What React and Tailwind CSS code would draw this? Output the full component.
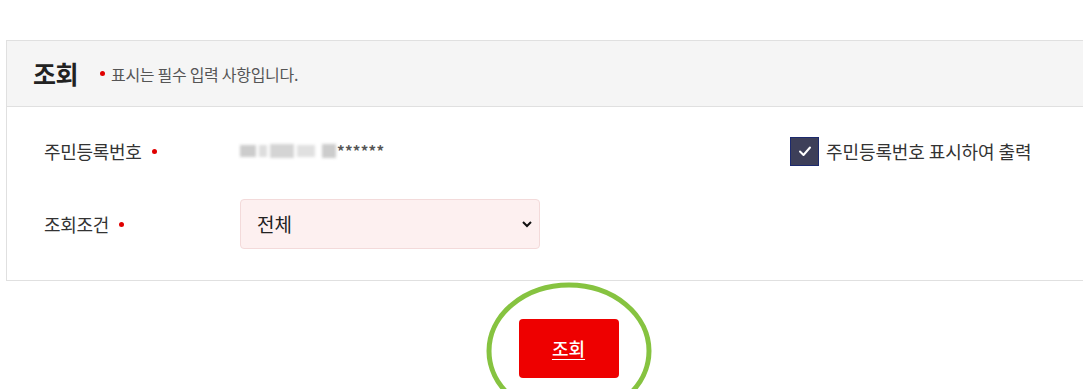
import React from "react";

export default function App() {
  const font = { fontFamily: '"Noto Sans CJK KR", "Noto Sans", sans-serif' };
  return (
    <div className="relative w-[1083px] h-[389px] overflow-hidden bg-white" style={font}>
      <div className="pt-[40px] pl-[6px]">
        <div className="w-[1100px] border border-[#e0e0e0]">
          <div className="h-[66px] bg-[#f5f5f5] border-b border-[#e0e0e0] flex items-center pl-[26px]">
            <span className="text-[25px] font-bold text-[#222] leading-none tracking-[-0.5px]">조회</span>
            <span className="ml-[22px] w-[5px] h-[5px] rounded-full bg-[#e00000]"></span>
            <span className="ml-[6px] text-[16px] text-[#555] tracking-[-0.3px]">표시는 필수 입력 사항입니다.</span>
          </div>
          <div className="h-[173px] pt-[20px]">
            <div className="flex items-center h-[48px]">
              <div className="w-[233px] pl-[37px] flex items-center text-[18px] text-[#333] tracking-[-0.3px]">
                주민등록번호
                <span className="ml-[10px] w-[5px] h-[5px] rounded-full bg-[#e00000]"></span>
              </div>
              <div className="w-[550px] flex items-center">
                <div className="flex items-center gap-[3px] blur-[1.5px]">
                  <div className="w-[16px] h-[12px] bg-[#cccccc]"></div>
                  <div className="w-[8px] h-[12px] bg-[#dddddd]"></div>
                  <div className="w-[24px] h-[14px] bg-[#d4d4d4]"></div>
                  <div className="w-[18px] h-[12px] bg-[#e0e0e0]"></div>
                  <div className="ml-[4px] w-[14px] h-[14px] bg-[#cccccc]"></div>
                </div>
                <span className="ml-[1px] text-[#555] text-[15px] font-bold tracking-[0.3px]">******</span>
              </div>
              <div className="flex items-center">
                <div className="w-[29px] h-[29px] border border-[#1c2a6e] bg-[#3d3f59] flex items-center justify-center">
                  <svg width="16" height="16" viewBox="0 0 16 16">
                    <path d="M3 8.5 L6.5 12 L13 4.5" fill="none" stroke="#ffffff" strokeWidth="2" strokeLinecap="round" strokeLinejoin="round" />
                  </svg>
                </div>
                <span className="ml-[7px] text-[18px] text-[#333] tracking-[-0.1px]">주민등록번호 표시하여 출력</span>
              </div>
            </div>
            <div className="flex items-center h-[50px] mt-[24px]">
              <div className="w-[233px] pl-[37px] flex items-center text-[18px] text-[#333] tracking-[-0.3px]">
                조회조건
                <span className="ml-[10px] w-[5px] h-[5px] rounded-full bg-[#e00000]"></span>
              </div>
              <div className="w-[300px] h-[50px] bg-[#fdf0f0] border border-[#f3dada] rounded-[4px] flex items-center justify-between pl-[16px] pr-[6px]">
                <span className="text-[19px] text-[#222]">전체</span>
                <svg width="12" height="12" viewBox="0 0 12 12">
                  <path d="M2 4 L6 8 L10 4" fill="none" stroke="#111" strokeWidth="2" />
                </svg>
              </div>
            </div>
          </div>
        </div>
        <div className="flex justify-center pt-[38px] pr-[6px] w-[1077px]">
          <button className="w-[100px] h-[59px] bg-[#ee0000] rounded-[4px] text-white text-[18px] font-medium underline underline-offset-[3px] ml-[54px]">
            조회
          </button>
        </div>
      </div>
      <svg className="absolute left-0 top-0 pointer-events-none" width="1083" height="389">
        <ellipse cx="569" cy="351" rx="80" ry="66" fill="none" stroke="#86c340" strokeWidth="5" />
      </svg>
    </div>
  );
}
